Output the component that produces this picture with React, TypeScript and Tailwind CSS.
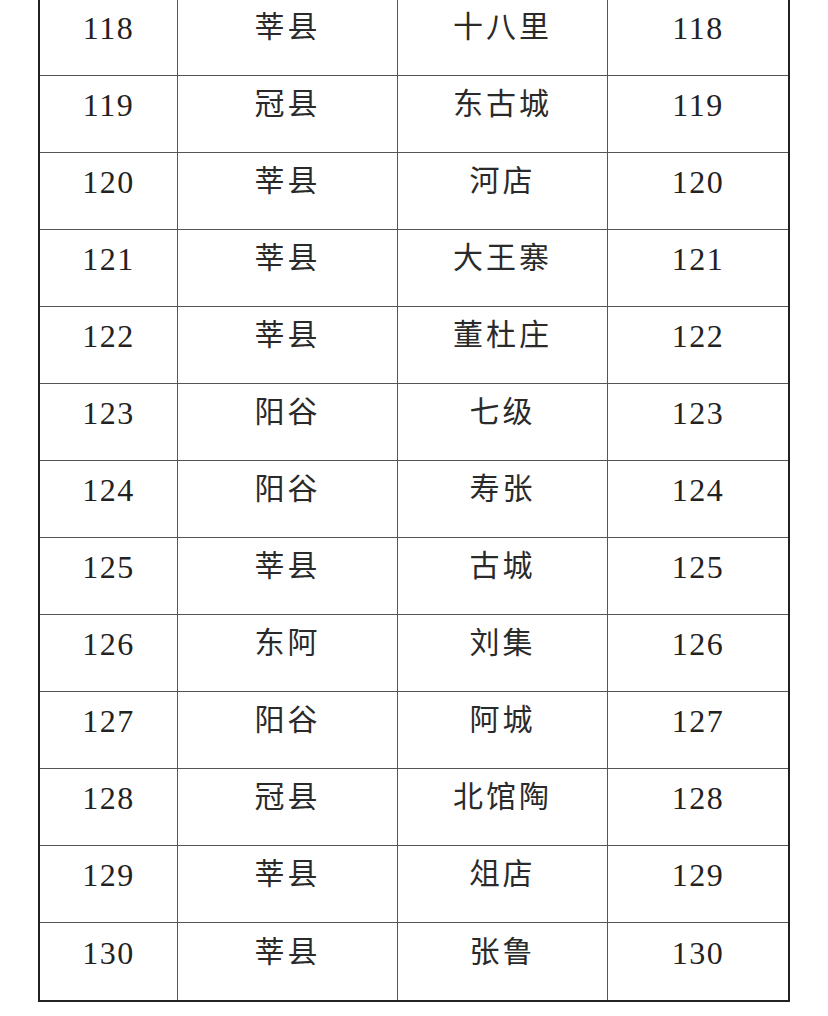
const rows: [string, string, string][] = [
  ['118', '莘县', '十八里'],
  ['119', '冠县', '东古城'],
  ['120', '莘县', '河店'],
  ['121', '莘县', '大王寨'],
  ['122', '莘县', '董杜庄'],
  ['123', '阳谷', '七级'],
  ['124', '阳谷', '寿张'],
  ['125', '莘县', '古城'],
  ['126', '东阿', '刘集'],
  ['127', '阳谷', '阿城'],
  ['128', '冠县', '北馆陶'],
  ['129', '莘县', '俎店'],
  ['130', '莘县', '张鲁'],
]

const num = "font-['Liberation_Serif',serif] text-[32px] leading-none text-[#222] tracking-[1.5px]"
const zh = "font-['Noto_Sans_CJK_SC',sans-serif] text-[30px] leading-none text-[#2a2a2a] tracking-[3px]"

export default function App() {
  return (
    <div className="min-h-[1016px] w-[828px] bg-white">
      <div className="-mt-px ml-[38px] w-[752px] border-x-2 border-b-2 border-[#222]">
        {rows.map(([no, county, town], i) => (
          <div
            key={no}
            className={`grid h-[77px] grid-cols-[138px_220px_210px_180px] ${
              i < rows.length - 1 ? 'border-b border-[#555]' : ''
            }`}
          >
            <div className="flex items-center justify-center border-r border-[#555] pb-[18px]">
              <span className={num}>{no}</span>
            </div>
            <div className="flex items-center justify-center border-r border-[#555] pb-[26px]">
              <span className={zh}>{county}</span>
            </div>
            <div className="flex items-center justify-center border-r border-[#555] pb-[26px]">
              <span className={zh}>{town}</span>
            </div>
            <div className="flex items-center justify-center pb-[18px]">
              <span className={num}>{no}</span>
            </div>
          </div>
        ))}
      </div>
    </div>
  )
}
